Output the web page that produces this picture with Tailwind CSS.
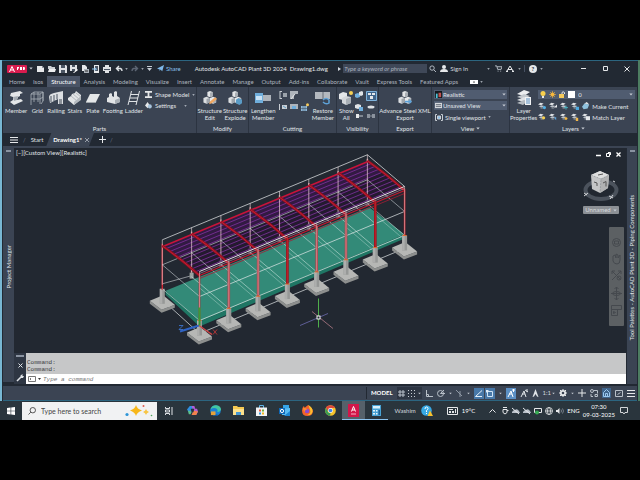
<!DOCTYPE html>
<html lang="en">
<head>
    <meta charset="UTF-8">
    <meta name="viewport" content="width=device-width, initial-scale=1.0">
    <title>Autodesk AutoCAD Plant 3D 2024 - Drawing1.dwg</title>
    <script src="https://cdn.jsdelivr.net/npm/@tailwindcss/browser@4"></script>
</head>
<body class="flex h-screen flex-col overflow-hidden bg-black py-[60px] font-['Lato','Open_Sans',sans-serif] text-[6px] leading-[8px] text-[#d3d8df]">

    <!-- shared symbols -->
    <svg class="hidden">
        <symbol id="caret" viewBox="0 0 6 4"><path d="M0.5 0.5h5L3 3.5z" fill="#c5cbd3"/></symbol>
        <symbol id="blocks" viewBox="0 0 16 16">
            <path d="M5 1l3-1 3 1v5l-3 1-3-1z" fill="#e4e6e8"/><path d="M8 2l3-1v5l-3 1z" fill="#a9afb5"/>
            <path d="M0.5 8l3.5-1.5 3.5 1.5v5l-3.5 1.5-3.5-1.5z" fill="#dcdfe2"/><path d="M4 9l3.5-1v5l-3.5 1.5z" fill="#9fa5ab"/>
            <path d="M8 8l3.5-1.5L15 8v5l-3.5 1.5L8 13z" fill="#e8eaec"/><path d="M11.5 9L15 8v5l-3.5 1.5z" fill="#a9afb5"/>
        </symbol>
        <symbol id="layers" viewBox="0 0 10 10">
            <path d="M0 3l3-2 4 1-3 2z" fill="#dfe2e5"/><path d="M1 5.5l3-1.5 4 1-3 2z" fill="#b9bfc6"/><path d="M2 7.5l2-1 3 1-2 1z" fill="#8f979f"/>
        </symbol>
    </svg>

    <div class="flex min-h-0 flex-1 flex-col border-l-2 border-r-2 border-l-[#78b7d3] border-r-[#4d7d61] bg-[#222933]">

        <!-- title bar -->
        <header class="flex h-4 shrink-0 items-center border-t border-[#2c6580] pl-[5px]">
            <button class="flex h-2 items-center gap-[2px] rounded-[1px] bg-[#d81b4e] px-[2px] text-white" aria-label="Application menu">
                <svg class="h-[6px] w-[6px]" viewBox="0 0 6 6" fill="none" stroke="#fff"><path d="M0.5 6L3 0.5 5.5 6M1.5 4h3"/></svg>
                <svg class="h-[3px] w-2" viewBox="0 0 8 3" fill="#fff"><path d="M0 0h2v1.5H1V3H0zM3 0h2v3H3zM6 0h1.5l.5 1.5L7.5 3H6z"/></svg>
            </button>
            <svg class="ml-[2px] h-[3px] w-1"><use href="#caret"/></svg>
            <nav class="ml-1 flex items-center gap-[3px]" aria-label="Quick access">
                <button aria-label="New"><svg class="h-2 w-2" viewBox="0 0 8 8"><path d="M0 1h5l2 2v4H0z" fill="#e6e8ea"/><path d="M5 1v2h2z" fill="#8d949c"/></svg></button>
                <button aria-label="Open"><svg class="h-2 w-2" viewBox="0 0 8 8"><path d="M0 1h3l1 1h3v2H0z" fill="#cdd1d5"/><path d="M1 4h7L7 7H0z" fill="#eceef0"/></svg></button>
                <button aria-label="Save"><svg class="h-2 w-2" viewBox="0 0 8 8"><path d="M0 0h7l1 1v7H0z" fill="#dfe2e5"/><path d="M2 0h4v3H2zM2 5h4v3H2z" fill="#4b5563"/></svg></button>
                <button aria-label="Save as"><svg class="h-2 w-2" viewBox="0 0 8 8"><path d="M0 0h7v6H0z" fill="#dfe2e5"/><path d="M2 0h3v2H2zM2 4h3v2H2z" fill="#4b5563"/><path d="M3 8l4-4 1 1-4 3z" fill="#fff"/></svg></button>
                <button aria-label="Open from web"><svg class="h-2 w-2" viewBox="0 0 8 8"><path d="M1 0h3l2 2v4H1z" fill="#e6e8ea"/><path d="M3 4h5v4H3z" fill="#aab1b9"/><path d="M4 6h3" stroke="#333"/></svg></button>
                <button aria-label="Save to mobile"><svg class="h-2 w-2" viewBox="0 0 8 8"><path d="M2 0h5v8H2z" fill="#e6e8ea"/><path d="M3 1h3v5H3z" fill="#4b5563"/><path d="M0 4h4M3 3l1.5 1L3 5.5" stroke="#8ec4ee" fill="none"/></svg></button>
                <button aria-label="Plot"><svg class="h-2 w-2" viewBox="0 0 8 8"><path d="M2 0h4v2H2zM0 2h8v4H0zM2 6h4v2H2z" fill="#dfe2e5"/><path d="M1 4h6v1H1z" fill="#4b5563"/></svg></button>
                <button aria-label="Undo" class="ml-px flex items-center gap-[2px]"><svg class="h-2 w-2" viewBox="0 0 8 8" fill="none" stroke="#dfe2e5" stroke-width="1.4"><path d="M4 1L1.5 3.5 4 6M1.5 3.5h4Q7 4 7 6"/></svg><svg class="h-[2px] w-[3px]"><use href="#caret"/></svg></button>
                <button aria-label="Redo" class="flex items-center gap-[2px]"><svg class="h-2 w-2" viewBox="0 0 8 8" fill="none" stroke="#5d6674" stroke-width="1.4"><path d="M4 1l2.5 2.5L4 6M6.5 3.5h-4Q1 4 1 6"/></svg><svg class="h-[2px] w-[3px]"><use href="#caret"/></svg></button>
                <button aria-label="Customize"><svg class="h-[5px] w-[5px]" viewBox="0 0 5 5" fill="#c5cbd3"><path d="M0 0h5v1H0zM0 2h5L2.5 5z"/></svg></button>
                <button class="ml-[2px] flex items-center gap-[2px] text-[#8cc3ee]"><svg class="h-[7px] w-[7px]" viewBox="0 0 8 8"><path d="M0 4l8-4-2 7-2-2-1 2V5z" fill="#7fb9ea"/></svg>Share</button>
            </nav>
            <div class="ml-[14px] whitespace-nowrap text-[#e4e7ea]">Autodesk AutoCAD Plant 3D 2024</div>
            <div class="ml-[3px] text-[#e4e7ea]">Drawing1.dwg</div>
            <div class="ml-auto flex items-center">
                <svg class="mr-[2px] h-1 w-[3px]" viewBox="0 0 3 4"><path d="M0 0l3 2-3 2z" fill="#d3d8df"/></svg>
                <input type="text" aria-label="Search help" placeholder="Type a keyword or phrase" class="h-[9px] w-[84px] bg-[#3f4858] px-px italic placeholder:text-[#a9b1bc]">
                <svg class="ml-[2px] h-[7px] w-[7px]" viewBox="0 0 8 8" fill="none" stroke="#c5cbd3"><circle cx="3.5" cy="3.5" r="2.5"/><path d="M5.5 5.5L8 8"/></svg>
                <button class="ml-1 flex items-center gap-[2px]"><svg class="h-[7px] w-2" viewBox="0 0 8 7" fill="#e6e8ea"><circle cx="4" cy="2" r="2"/><path d="M0 7q0-3 4-3t4 3z"/></svg>Sign In<svg class="ml-[17px] h-[2px] w-[3px]"><use href="#caret"/></svg></button>
                <svg class="ml-[5px] h-[7px] w-[7px]" viewBox="0 0 8 8" fill="none" stroke="#c5cbd3"><path d="M0 1h2l1 4h4l1-3H2.5"/><path d="M3 7h1M6 7h1"/></svg>
                <svg class="ml-1 h-[7px] w-2" viewBox="0 0 8 7" fill="none" stroke="#e6e8ea"><path d="M1 6L4 1l3 5M2 4.5h4"/><path d="M0 6.5h2M6 6.5h2" stroke-width="1.5"/></svg>
                <svg class="ml-1 h-[2px] w-[3px]"><use href="#caret"/></svg>
                <div class="ml-[3px] h-[7px] border-l border-[#465061]"></div>
                <button aria-label="Help" class="ml-1 flex h-2 w-2 items-center justify-center rounded-full bg-[#e6e8ea] font-bold text-[#222933]">?</button>
                <svg class="ml-[3px] h-[2px] w-[3px]"><use href="#caret"/></svg>
                <button aria-label="Minimize" class="ml-[38px]"><svg class="h-[7px] w-[5px]" viewBox="0 0 5 7" stroke="#e6e8ea"><path d="M0 3.5h5"/></svg></button>
                <button aria-label="Maximize" class="ml-[17px]"><svg class="h-[5px] w-[5px]" viewBox="0 0 5 5" fill="none" stroke="#e6e8ea"><path d="M0.5 0.5h4v4h-4z"/></svg></button>
                <button aria-label="Close" class="ml-4 mr-2"><svg class="h-[6px] w-[6px]" viewBox="0 0 6 6" stroke="#e6e8ea"><path d="M0.5 0.5l5 5M5.5 0.5l-5 5"/></svg></button>
            </div>
        </header>

        <!-- ribbon tabs -->
        <nav class="flex h-[11px] shrink-0 items-center gap-2 whitespace-nowrap pl-[7px] leading-[11px] text-[#aeb5bf]">
            <a href="#">Home</a>
            <a href="#">Isos</a>
            <a href="#" class="-mx-1 bg-[#4a5466] px-1 text-white">Structure</a>
            <a href="#">Analysis</a>
            <a href="#">Modeling</a>
            <a href="#">Visualize</a>
            <a href="#">Insert</a>
            <a href="#">Annotate</a>
            <a href="#">Manage</a>
            <a href="#">Output</a>
            <a href="#">Add-ins</a>
            <a href="#">Collaborate</a>
            <a href="#">Vault</a>
            <a href="#">Express Tools</a>
            <a href="#">Featured Apps</a>
            <button aria-label="Ribbon display" class="ml-1 flex items-center gap-[2px]"><svg class="h-1 w-2" viewBox="0 0 8 4"><path d="M0 0h8v4H0z" fill="#fff"/><path d="M3 2.5h2L4 1z" fill="#222"/></svg><svg class="h-[2px] w-[3px]"><use href="#caret"/></svg></button>
        </nav>

        <!-- ribbon panels -->
        <section class="mx-px grid h-[46px] shrink-0 grid-cols-[194fr_52fr_88fr_42fr_53fr_78fr_127fr] divide-x divide-[#2c3441] bg-[#3b4453] text-center leading-[7px] text-[#e0e4e8]">
            <div class="flex min-w-0 flex-col justify-between pt-1">
                <div class="flex gap-[2px] pl-[2px]">
                    <button class="flex flex-col items-center gap-[2px]"><svg class="h-[14px] w-4" viewBox="0 0 14 14"><path d="M2 2l9-2 3 2-3 1v2L9 6l-1 3 4-1 2 2-9 4-4-3 3-2V6L1 5z" fill="#e4e6e8"/><path d="M4 6l5-1-1 4-3 1z" fill="#a5abb2"/></svg>Member</button>
                    <button class="flex flex-col items-center gap-[2px]"><svg class="h-[14px] w-4" viewBox="0 0 14 14" fill="none" stroke="#aab1b9" stroke-width=".8"><path d="M1 3l3-2h9v9l-2 3M1 3v11M4 1v10M8 1v10M13 1v9M1 3h9l3-2M10 3v10M1 8h9l3-2"/></svg>Grid</button>
                    <button class="flex flex-col items-center gap-[2px]"><svg class="h-[14px] w-4" viewBox="0 0 14 14"><path d="M0 6q0-3 5-4l9-2v13H9V8L1 12z" fill="#dcdfe2"/><path d="M2 5v6M5 4v6M8 3v5" stroke="#4b5563"/><path d="M10 8h3v5h-3z" fill="#8b9199"/></svg>Railing</button>
                    <button class="flex flex-col items-center gap-[2px]"><svg class="h-[14px] w-4" viewBox="0 0 14 14"><path d="M0 7l3-2 1-2 3-1 1-2 5 4v4l-7 6-6-5z" fill="#e2e4e6"/><path d="M3 5l6 5M5 3l6 5M8 2l5 4" stroke="#b5babf"/><path d="M6 11l7-6v4l-7 5z" fill="#b4b9be"/></svg>Stairs</button>
                    <button class="flex flex-col items-center gap-[2px]"><svg class="h-[14px] w-4" viewBox="0 0 14 14"><path d="M4 3h10l-4 8H0z" fill="#e4e6e8"/><path d="M0 11h10v1H0z" fill="#9fa5ab"/></svg>Plate</button>
                    <button class="flex flex-col items-center gap-[2px]"><svg class="h-[14px] w-4" viewBox="0 0 14 14"><path d="M1 7l2-1V3l2-1 1 1v2l2 1V1l2-1 1 1v4l3 2v4l-5 2-8-2z" fill="#e2e4e6"/><path d="M9 9l5-2v4l-5 2z" fill="#aab0b6"/></svg>Footing</button>
                    <button class="flex flex-col items-center gap-[2px]"><svg class="h-[14px] w-4" viewBox="0 0 14 14" fill="none" stroke="#dfe2e5"><path d="M4.5 0L1 14M12.5 0L9 14M4 3.5h8M3 7h8M2 10.5h8"/></svg>Ladder</button>
                    <div class="flex flex-col gap-1 whitespace-nowrap">
                        <button class="flex items-center gap-[3px]"><svg class="h-[7px] w-[7px]" viewBox="0 0 8 8" fill="#e6e8ea"><path d="M0 0h8v2H5v4h3v2H0V6h3V2H0z"/></svg>Shape Model<svg class="h-[2px] w-[3px]"><use href="#caret"/></svg></button>
                        <button class="flex items-center gap-[3px]"><svg class="h-[7px] w-[7px]" viewBox="0 0 8 8"><path d="M0 4l3-4 2 3-2 4z" fill="#e6e8ea"/><circle cx="5.5" cy="5" r="2.3" fill="#a8c4dd"/></svg>Settings<svg class="ml-[5px] h-[2px] w-[3px]"><use href="#caret"/></svg></button>
                    </div>
                </div>
                <h2 class="pb-px">Parts</h2>
            </div>
            <div class="flex min-w-0 flex-col justify-between pt-1">
                <div class="flex justify-center gap-px">
                    <button class="flex flex-col items-center gap-[2px]"><svg class="h-[14px] w-4" viewBox="0 0 16 16"><use href="#blocks"/><path d="M8 12l6-5 2 2-6 5-3 1z" fill="#f0a862"/></svg>Structure<br>Edit</button>
                    <button class="flex flex-col items-center gap-[2px]"><svg class="h-[14px] w-4" viewBox="0 0 16 16"><use href="#blocks"/><path d="M9 10l3-2 4 2v4l-3 2-4-2z" fill="#5b9cc6"/></svg>Structure<br>Explode</button>
                </div>
                <h2 class="pb-px">Modify</h2>
            </div>
            <div class="flex min-w-0 flex-col justify-between pt-1">
                <div class="flex justify-between px-[2px]">
                    <button class="flex flex-col items-center gap-[2px]"><svg class="h-[14px] w-4" viewBox="0 0 16 14"><path d="M0 2h8v10H0z" fill="#6faedc"/><path d="M1 5h6v4H1z" fill="#c9e2f5"/><path d="M8 4h8v6H8z" fill="#aeb4bb"/></svg>Lengthen<br>Member</button>
                    <div class="grid grid-cols-3 content-start gap-x-[3px] gap-y-1">
                        <svg class="h-2 w-2" viewBox="0 0 8 8"><path d="M1 0v8M1 0.5h2M1 7.5h2" stroke="#c9ced4" fill="none"/><path d="M4 2h4v4H4z" fill="#9ca3ab"/></svg>
                        <svg class="h-2 w-2" viewBox="0 0 8 8"><path d="M0 0h8v3H4v5H0z" fill="#aeb4bb"/><path d="M1 8l4-5" stroke="#e6e8ea"/></svg>
                        <span></span>
                        <svg class="h-2 w-2" viewBox="0 0 8 8"><path d="M0 1h1v6H0zM3 2h5v4H3z" fill="#c9ced4"/><path d="M4 3l3 2" stroke="#5b9cc6"/></svg>
                        <svg class="h-2 w-2" viewBox="0 0 8 8"><path d="M0 1h8v5H0z" fill="#aeb4bb"/><path d="M2 3h4v3H2z" fill="#6faedc"/></svg>
                        <svg class="h-2 w-2" viewBox="0 0 8 8"><path d="M0 3h6v5H0z" fill="#8fb9da"/><path d="M2 3v5M4 3v5M0 5.5h6" stroke="#3b4453" stroke-width=".5"/><circle cx="6.5" cy="1.8" r="1.5" fill="#f4c95b"/></svg>
                    </div>
                    <button class="flex flex-col items-center gap-[2px]"><svg class="h-[14px] w-4" viewBox="0 0 16 14"><path d="M0 1h15v7H0z" fill="#b4b9bf"/><path d="M8 1v7" stroke="#666d76"/><path d="M8 9q3-3 6 0v3q-3 2-6-1" fill="none" stroke="#5ea2d8" stroke-width="1.5"/></svg>Restore<br>Member</button>
                </div>
                <h2 class="pb-px">Cutting</h2>
            </div>
            <div class="flex min-w-0 flex-col justify-between pt-1">
                <div class="flex justify-between px-[2px]">
                    <button class="flex flex-col items-center gap-[2px]"><svg class="h-[14px] w-[14px]" viewBox="0 0 14 14"><path d="M0 3l4-2 4 1v5l-4 2-4-1z" fill="#e4e6e8"/><path d="M3 7l4-2 5 1v6l-5 2-4-2z" fill="#d3d6d9"/><path d="M7 8l5-2v6l-5 2z" fill="#a9afb5"/><circle cx="12" cy="2" r="2" fill="#f6d155"/></svg>Show<br>All</button>
                    <div class="grid grid-cols-2 content-start gap-[2px]">
                        <svg class="h-[9px] w-[10px]" viewBox="0 0 10 9"><path d="M1 3l3-1 2 1v3L3 7 1 6z" fill="#6faedc"/><path d="M5 1l3-1 1 1v3L7 5 5 4z" fill="#e0e3e6"/></svg>
                        <svg class="h-[10px] w-[11px]" viewBox="0 0 11 10"><path d="M0.5 0.5h10v9h-10z" fill="#40658a" stroke="#7fb3dc"/><path d="M2 2h3v2H2zM6 2h3v2H6zM4 5h3v3H4z" fill="#e6e8ea"/></svg>
                        <svg class="h-[9px] w-[10px]" viewBox="0 0 10 9"><path d="M1 2l3-1 3 1v3L4 6 1 5z" fill="#e0e3e6"/><path d="M5 4h4v4H5z" fill="#6faedc"/></svg>
                        <svg class="h-[9px] w-[10px]" viewBox="0 0 10 9"><ellipse cx="5" cy="4" rx="3.5" ry="1.5" fill="#e0e3e6"/></svg>
                        <svg class="h-1 w-[10px]" viewBox="0 0 10 4"><path d="M2 0h3v4H2z" fill="#e6e8ea"/><path d="M5 2h4" stroke="#c5cbd3"/></svg>
                        <svg class="h-1 w-[10px]" viewBox="0 0 10 4"><path d="M1 0h3v4H1zM6 0h3v4H6zM4 1.5h2v1H4z" fill="#8b939e"/></svg>
                    </div>
                </div>
                <h2 class="pb-px">Visibility</h2>
            </div>
            <div class="flex min-w-0 flex-col items-center justify-between pt-1">
                <button class="flex flex-col items-center gap-[2px] whitespace-nowrap"><svg class="h-[14px] w-4" viewBox="0 0 16 16"><use href="#blocks"/><path d="M8 11h5V9l3 3-3 3v-2H8z" fill="#5ea2d8"/></svg>Advance Steel XML<br>Export</button>
                <h2 class="pb-px">Export</h2>
            </div>
            <div class="flex min-w-0 flex-col justify-between pt-[3px]">
                <div class="flex flex-col gap-[2px] px-[2px]">
                    <div class="flex h-[9px] items-center bg-[#505c70] px-px">
                        <svg class="h-[7px] w-[7px]" viewBox="0 0 8 8"><path d="M0 0h8v8H0z" fill="#14181d"/><path d="M1 3h2v5H1z" fill="#4fc3d9"/><path d="M4 2h3v5H4z" fill="#c0504d"/></svg>
                        <select aria-label="Visual style" class="ml-px h-[9px] min-w-0 flex-1 appearance-none bg-transparent"><option>Realistic</option></select>
                        <svg class="h-[3px] w-1"><use href="#caret"/></svg>
                    </div>
                    <div class="flex h-[9px] items-center bg-[#505c70] px-px">
                        <svg class="h-[7px] w-[7px]" viewBox="0 0 8 8"><path d="M0 1h8v6H0z" fill="#d5d8dc"/><path d="M1 3h6M1 5h6" stroke="#5b6470"/></svg>
                        <select aria-label="Named view" class="ml-px h-[9px] min-w-0 flex-1 appearance-none bg-transparent"><option>Unsaved View</option></select>
                        <svg class="h-[3px] w-1"><use href="#caret"/></svg>
                    </div>
                    <button class="flex h-[10px] items-center gap-[2px] whitespace-nowrap px-px"><svg class="h-[7px] w-2" viewBox="0 0 8 7" fill="none" stroke="#c9ced4"><path d="M2 0.5H.5v6H2M6 0.5h1.5v6H6"/><path d="M2.5 2h3v3h-3z" fill="#8ec4ee"/></svg>Single viewport<svg class="h-[2px] w-[3px]"><use href="#caret"/></svg></button>
                </div>
                <h2 class="flex items-center justify-center gap-[2px] pb-px">View<svg class="h-[3px] w-1"><use href="#caret"/></svg></h2>
            </div>
            <div class="flex min-w-0 flex-col justify-between pt-[3px]">
                <div class="flex gap-px pr-[2px]">
                    <button class="flex flex-col items-center gap-px"><svg class="h-4 w-4" viewBox="0 0 16 16"><path d="M1 4l7-4 6 2-6 4z" fill="#eceef0"/><path d="M1 7l7-3 6 2-6 3z" fill="#c4c9ce"/><path d="M1 10l7-3 6 2-6 3z" fill="#e0e3e6"/><path d="M1 13l7-3 4 1-5 4z" fill="#b3b9bf"/><path d="M9 7h6v8H9z" fill="#f1f3f5"/><path d="M10 9h4M10 11h4M10 13h4" stroke="#5b8fc0"/></svg>Layer<br>Properties</button>
                    <div class="flex min-w-0 flex-1 flex-col gap-[3px]">
                        <div class="flex h-[9px] items-center gap-[3px] bg-[#505c70] px-[2px]">
                            <svg class="h-[7px] w-[6px]" viewBox="0 0 6 7"><circle cx="3" cy="2.5" r="2.5" fill="#f7cf4d"/><path d="M2 5h2v2H2z" fill="#e6e8ea"/></svg>
                            <svg class="h-[7px] w-[7px]" viewBox="0 0 7 7"><circle cx="3.5" cy="3.5" r="2" fill="#f6b73c"/><path d="M3.5 0v7M0 3.5h7M1 1l5 5M6 1L1 6" stroke="#f6b73c" stroke-width=".6"/></svg>
                            <svg class="h-[7px] w-[6px]" viewBox="0 0 6 7"><path d="M0 3h5v4H0z" fill="#f4c95b"/><path d="M3 3V1.5q1-1.5 2.5 0V3" fill="none" stroke="#e6e8ea"/></svg>
                            <span class="h-[7px] w-[7px] bg-white"></span>
                            <select aria-label="Layer" class="h-[9px] min-w-0 flex-1 appearance-none bg-transparent"><option>0</option></select>
                            <svg class="h-[3px] w-1"><use href="#caret"/></svg>
                        </div>
                        <div class="flex items-center gap-[3px]">
                            <svg class="h-2 w-2" viewBox="0 0 10 10"><use href="#layers"/><circle cx="8" cy="7" r="2" fill="#51b0e6"/></svg>
                            <svg class="h-2 w-2" viewBox="0 0 10 10"><use href="#layers"/><path d="M6 7l4-4v4z" fill="#e6e8ea"/></svg>
                            <svg class="h-2 w-2" viewBox="0 0 10 10"><use href="#layers"/><path d="M5 7h5M7.5 4.5v5" stroke="#4cc2cf"/></svg>
                            <svg class="h-2 w-2" viewBox="0 0 10 10"><use href="#layers"/><path d="M6 6h4v4H6z" fill="#4aa7de"/></svg>
                            <button class="flex items-center gap-[2px] whitespace-nowrap"><svg class="h-2 w-2" viewBox="0 0 10 10"><path d="M0 6l3-4 6 1-2 5-5 1z" fill="#8fc1dd"/><path d="M3 2l3-2 3 3z" fill="#e6e8ea"/></svg>Make Current</button>
                        </div>
                        <div class="flex items-center gap-[3px]">
                            <svg class="h-2 w-2" viewBox="0 0 10 10"><use href="#layers"/><circle cx="7" cy="6" r="2" fill="#f7cf4d"/></svg>
                            <svg class="h-2 w-2" viewBox="0 0 10 10"><use href="#layers"/><path d="M6 6l3-1v4z" fill="#5ea2d8"/></svg>
                            <svg class="h-2 w-2" viewBox="0 0 10 10"><use href="#layers"/><circle cx="7.5" cy="7" r="1.8" fill="#f6b73c"/></svg>
                            <svg class="h-2 w-2" viewBox="0 0 10 10"><use href="#layers"/><path d="M6 6h3v4H6z" fill="#f0b64a"/></svg>
                            <button class="flex items-center gap-[2px] whitespace-nowrap"><svg class="h-2 w-2" viewBox="0 0 10 10"><use href="#layers"/><path d="M5 4h5v5H5z" fill="#e6e8ea"/></svg>Match Layer</button>
                        </div>
                    </div>
                </div>
                <h2 class="flex items-center justify-center gap-[2px] pb-px">Layers<svg class="h-[3px] w-1"><use href="#caret"/></svg></h2>
            </div>
        </section>

        <!-- drawing tabs -->
        <nav class="flex h-[13px] shrink-0 items-center pl-2">
            <button aria-label="Menu"><svg class="h-[6px] w-2" viewBox="0 0 8 6" fill="#e6e8ea"><path d="M0 0h8v1H0zM0 2.5h8v1H0zM0 5h8v1H0z"/></svg></button>
            <span class="mx-[5px] text-[#6d7788]">/</span>
            <a href="#" class="text-[#e0e4e8]">Start</a>
            <a href="#" class="ml-[3px] flex h-[13px] items-center gap-[3px] bg-[#3b4453] pl-[7px] pr-[5px] font-bold text-white [clip-path:polygon(5px_0,100%_0,calc(100%-5px)_100%,0_100%)]">Drawing1*<svg class="h-1 w-1" viewBox="0 0 4 4" stroke="#aeb5bf" stroke-width=".8"><path d="M0 0l4 4M4 0L0 4"/></svg></a>
            <button aria-label="New drawing" class="ml-[5px]"><svg class="h-[7px] w-[7px]" viewBox="0 0 7 7" stroke="#e6e8ea"><path d="M3.5 0v7M0 3.5h7"/></svg></button>
            <span class="ml-1 text-[#6d7788]">/</span>
        </nav>

        <!-- workspace -->
        <div class="mx-px flex min-h-0 flex-1 border-t-2 border-[#3b4453]">
            <aside class="flex w-[11px] shrink-0 flex-col items-center border-b-2 border-b-[#222933] bg-[#3b4453]">
                <div class="mt-[2px] h-[2px] w-[5px] bg-[#8a93a1]"></div>
                <div class="flex flex-1 items-center text-[#e0e4e8]"><span class="rotate-180 [writing-mode:vertical-rl]">Project Manager</span></div>
            </aside>

            <div class="flex min-w-0 flex-1 flex-col">
                <main class="relative min-h-0 flex-1 bg-[#222831]">
                    <svg id="model" class="block h-full w-full" viewBox="14 148 612 204"></svg>
                    <div class="absolute left-[2px] top-px text-[#e0e4e8]">[−][Custom View][Realistic]</div>

                    <div class="absolute right-[5px] top-[3px] flex items-center gap-[5px]">
                        <button aria-label="Minimize drawing"><svg class="h-[6px] w-[5px]" viewBox="0 0 5 6" stroke="#fff" stroke-width="1.5"><path d="M0 4.5h5"/></svg></button>
                        <button aria-label="Restore drawing"><svg class="h-[5px] w-[5px]" viewBox="0 0 5 5" fill="none" stroke="#fff"><path d="M0.5 1.5h3v3h-3zM2 .5h2.5V3"/></svg></button>
                        <button aria-label="Close drawing"><svg class="h-[5px] w-[5px]" viewBox="0 0 5 5" stroke="#fff" stroke-width="1.3"><path d="M0.5 0.5l4 4M4.5 0.5l-4 4"/></svg></button>
                    </div>

                    <!-- view cube -->
                    <div class="absolute right-[6px] top-5 flex flex-col items-center gap-[2px]">
                        <svg class="h-[36px] w-[38px]" viewBox="583 168 38 36">
                            <ellipse cx="602" cy="190" rx="15.5" ry="9" fill="none" stroke="#4b525c" stroke-width="4"/>
                            <path d="M592 175l9-4 9 4-1 13-8 5-8-4z" fill="#c4c5c6"/>
                            <path d="M592 175l9-4 9 4-8 4z" fill="#dddede"/>
                            <path d="M602 179l8-4-1 13-8 5z" fill="#b1b2b3"/>
                            <path d="M592 175l10 4-1 14M602 179l8-4" fill="none" stroke="#777c82" stroke-width=".5" stroke-dasharray="2 1"/>
                            <path d="M599 175l5-1M595 182l3 1v3M604 183l3-1.5v5" fill="none" stroke="#555"/>
                            <path d="M585 193l3 2M585 196l4-3M610 196l4 2M611 199l3-4M614 181l2 1" stroke="#d5d7da" fill="none"/>
                        </svg>
                        <button class="flex h-2 items-center gap-[2px] rounded-[1px] bg-[#8c9095] px-[2px] text-[#d8dadc]">Unnamed<svg class="h-[3px] w-1"><use href="#caret"/></svg></button>
                    </div>

                    <!-- navigation bar -->
                    <div class="absolute right-[2px] top-[79px] flex h-[99px] w-[15px] flex-col items-center justify-around rounded-[1px] bg-[#5c6063] py-[7px]">
                        <svg class="h-[11px] w-[11px]" viewBox="0 0 11 11" fill="none" stroke="#45494e"><circle cx="5.5" cy="5.5" r="4"/><path d="M3.5 4h4v3h-4z"/></svg>
                        <svg class="h-3 w-[11px]" viewBox="0 0 11 12" fill="none" stroke="#45494e"><path d="M2 6V3l2-1 1 3V1l2 1v3l2-3v5q0 4-3 4T2 8z"/></svg>
                        <svg class="h-[11px] w-[11px]" viewBox="0 0 11 11" fill="none" stroke="#45494e"><path d="M1 1l9 9M10 1L1 10M1 4V1h3M7 1h3v3"/><circle cx="8" cy="8" r="2"/></svg>
                        <svg class="h-[13px] w-[11px]" viewBox="0 0 11 13" fill="none" stroke="#45494e"><path d="M5.5 0v13M0 6.5h11M3.5 2l2-2 2 2M3.5 11l2 2 2-2"/><ellipse cx="5.5" cy="6.5" rx="4" ry="2"/></svg>
                        <svg class="h-[11px] w-[11px]" viewBox="0 0 11 11" fill="none" stroke="#45494e"><path d="M0.5 0.5h10v4h-10zM0.5 4.5h6v6h-6zM2.5 6.5l2 1-2 1z"/></svg>
                    </div>
                </main>

                <!-- command line -->
                <div class="flex h-[31px] shrink-0 font-['Liberation_Mono',monospace] leading-[7px]">
                    <div class="flex w-3 flex-col items-center justify-between bg-[#2e3643] py-[2px]">
                        <div class="h-[2px] w-2 bg-[#8a93a1]"></div>
                        <button aria-label="Close command line"><svg class="block h-[5px] w-[5px]" viewBox="0 0 5 5" stroke="#e0e4e8"><path d="M0.5 0.5l4 4M4.5 0.5l-4 4"/></svg></button>
                        <button aria-label="Customize command line"><svg class="block h-2 w-2" viewBox="0 0 8 8"><path d="M1 7l4-4" stroke="#e0e4e8" stroke-width="1.6"/><path d="M4.5 1.5L6.5 0v2h1.5L7 4 4.5 4z" fill="#e0e4e8"/></svg></button>
                    </div>
                    <div class="flex flex-1 flex-col">
                        <div class="flex-1 bg-[#c6c7c8] pl-px pt-[6px] text-[#3d4043]">Command:<br>Command:</div>
                        <label class="flex h-[10px] items-center gap-[2px] bg-white px-[2px]">
                            <svg class="h-[6px] w-2" viewBox="0 0 8 6" fill="none" stroke="#777"><path d="M0.5 0.5h7v5h-7zM2 2l1 1-1 1"/></svg>
                            <svg class="h-[2px] w-[3px]" viewBox="0 0 6 4"><path d="M0 0h6L3 4z" fill="#333"/></svg>
                            <input type="text" aria-label="Command" placeholder="Type a command" class="flex-1 italic placeholder:text-[#757575]">
                        </label>
                    </div>
                </div>
            </div>

            <aside class="flex w-[11px] shrink-0 flex-col items-center border-l border-[#222933] bg-[#3b4453]">
                <div class="mt-[2px] h-[2px] w-[5px] bg-[#8a93a1]"></div>
                <div class="flex flex-1 items-center whitespace-nowrap text-[#e0e4e8]"><span class="rotate-180 [writing-mode:vertical-rl]">Tool Palettes - AutoCAD Plant 3D - Piping Components</span></div>
            </aside>
        </div>

        <!-- status bar -->
        <footer class="mx-px mt-[2px] flex h-[15px] shrink-0 items-center justify-end gap-1 border-b border-[#2c6580] bg-[#3b4453] pr-[2px]">
            <div class="h-3 border-l border-[#222933]"></div>
            <button class="font-bold text-white">MODEL</button>
            <div class="flex h-3 items-center gap-[3px] bg-[#2d3542] px-px">
                <svg class="h-[7px] w-[7px]" viewBox="0 0 7 7" stroke="#b9c0c9"><path d="M2 0v7M5 0v7M0 2h7M0 5h7"/></svg>
                <svg class="h-[7px] w-[7px]" viewBox="0 0 7 7" fill="#c9ced4"><path d="M0 0h1v1H0zM3 0h1v1H3zM6 0h1v1H6zM0 3h1v1H0zM3 3h1v1H3zM6 3h1v1H6zM0 6h1v1H0zM3 6h1v1H3zM6 6h1v1H6z"/></svg>
                <svg class="h-[3px] w-[3px]"><use href="#caret"/></svg>
            </div>
            <svg class="h-[7px] w-[7px]" viewBox="0 0 7 7" fill="none" stroke="#b9c0c9"><path d="M0.5 0v6.5H7M0 4.5h2.5V7"/></svg>
            <svg class="h-2 w-2" viewBox="0 0 8 8" fill="none" stroke="#b9c0c9"><circle cx="3.5" cy="4.5" r="3"/><path d="M3.5 4.5L7 1M3.5 4.5H8"/></svg>
            <svg class="h-[3px] w-[3px]"><use href="#caret"/></svg>
            <svg class="h-[7px] w-[7px]" viewBox="0 0 7 7" fill="none" stroke="#8f98a5"><path d="M0 0l6 6M4 1v6"/></svg>
            <svg class="h-[3px] w-[3px]"><use href="#caret"/></svg>
            <div class="flex gap-px">
                <button aria-label="Object snap tracking" class="flex h-[11px] w-[10px] items-center justify-center bg-[#4878a8]"><svg class="h-[7px] w-[7px]" viewBox="0 0 7 7" fill="none" stroke="#e6f0fa"><path d="M7 0.5L0.5 6.5H7"/></svg></button>
                <button aria-label="Object snap" class="flex h-[11px] w-[10px] items-center justify-center bg-[#4878a8]"><svg class="h-[7px] w-[7px]" viewBox="0 0 7 7" fill="none" stroke="#cfe3f5"><path d="M1.5 1.5h5v5h-5z"/><path d="M0 0h2v2H0z" fill="#fff"/></svg></button>
            </div>
            <svg class="h-[3px] w-[3px]"><use href="#caret"/></svg>
            <button aria-label="Annotation visibility" class="flex h-[11px] w-[10px] items-center justify-center bg-[#5b8fc4]"><svg class="h-2 w-2" viewBox="0 0 8 8" fill="none" stroke="#fff"><path d="M1 8l3-6 2 6M2 5h3M5 1h3M6.5 0v3"/></svg></button>
            <svg class="h-2 w-2" viewBox="0 0 8 8" fill="none" stroke="#e0e4e8"><path d="M1 8l3-6 2 6M2 5h3M5 1l3 2M7 0v3"/></svg>
            <svg class="h-2 w-[7px]" viewBox="0 0 7 8" fill="#e0e4e8"><path d="M3.5 0L6.5 8 5 7.5 3.5 5 2 7.5 0.5 8z"/></svg>
            <button class="flex items-center gap-px">1:1<svg class="h-[3px] w-[3px]"><use href="#caret"/></svg></button>
            <svg class="h-2 w-2" viewBox="0 0 8 8" fill="none" stroke="#e6e8ea"><circle cx="4" cy="4" r="2.2" stroke-width="1.8"/><path d="M4 0v1M4 7v1M0 4h1M7 4h1M1 1l1 1M6 6l1 1M7 1L6 2M2 6L1 7"/></svg>
            <svg class="h-[3px] w-[3px]"><use href="#caret"/></svg>
            <svg class="h-2 w-2" viewBox="0 0 8 8" stroke="#e6e8ea"><path d="M4 0v8M0 4h8"/></svg>
            <svg class="h-2 w-2" viewBox="0 0 8 8" fill="none" stroke="#b9c0c9"><circle cx="2" cy="2" r="1.5"/><path d="M4 1.5h3.5v3M1 5v2.5h2M5 5.5h2.5v2H5z"/></svg>
            <svg class="h-[10px] w-[9px]" viewBox="0 0 9 10"><path d="M0 0h9v10H0z" fill="#3f648b"/><path d="M1.5 4.5l3-3 3 3v4h-6zM3.5 8V5.5h2V8" fill="none" stroke="#9cc8ee"/></svg>
            <svg class="h-[7px] w-2" viewBox="0 0 8 7" fill="none" stroke="#b9c0c9"><path d="M0.5 0.5h7v6h-7zM2.5 4.5l3-2"/></svg>
            <svg class="h-[7px] w-2" viewBox="0 0 8 7" fill="#e6e8ea"><path d="M0 0h8v1H0zM0 3h8v1H0zM0 6h8v1H0z"/></svg>
        </footer>
    </div>

    <!-- windows taskbar -->
    <footer class="flex h-[19px] shrink-0 items-center bg-[#2a353d]">
        <button aria-label="Start" class="flex w-[22px] justify-center"><svg class="h-2 w-2" viewBox="0 0 8 8" fill="#fff"><path d="M0 1l3.6-.5v3.2H0zM4.2.4L8 0v3.7H4.2zM0 4.3h3.6v3.2L0 7zM4.2 4.3H8V8l-3.8-.5z"/></svg></button>
        <label class="flex h-[18px] w-[135px] items-center gap-1 bg-[#f1f2f3] px-1 text-[7px]">
            <svg class="ml-[2px] h-2 w-2" viewBox="0 0 8 8" fill="none" stroke="#333" stroke-width=".8"><circle cx="4.8" cy="3.2" r="2.7"/><path d="M2.8 5.2L0.5 7.5"/></svg>
            <input type="text" aria-label="Search" placeholder="Type here to search" class="ml-px w-px flex-1 placeholder:text-[#444]">
            <svg class="h-[13px] w-7" viewBox="0 0 28 13"><path d="M11 1q1 4 6 5.5-5 1.5-6 5.5-1-4-6-5.5Q10 5 11 1z" fill="#f7b719"/><path d="M21 5q.5 2 3 3-2.5 1-3 3-.5-2-3-3 2.5-1 3-3z" fill="#f7c544"/><circle cx="2" cy="10.5" r="1.6" fill="#2f96d8"/><circle cx="18.5" cy="2" r="1" fill="#e05a4e"/><circle cx="26.5" cy="11.5" r=".8" fill="#4aa55a"/></svg>
        </label>
        <nav class="flex h-full items-stretch" aria-label="Pinned apps">
            <button aria-label="Task view" class="flex w-6 items-center justify-center"><svg class="h-2 w-2" viewBox="0 0 8 8" fill="none" stroke="#e0e4e8"><path d="M0.5 0v1.5h4V0M0.5 3h4v2h-4zM0.5 8V6.5h4V8M7 0v8"/></svg></button>
            <button aria-label="Copilot" class="flex w-[23px] items-center justify-center"><svg class="h-[11px] w-[11px]" viewBox="0 0 12 12"><path d="M3 1h4l2 4-2 3H2L0 5z" fill="#2f8fe0"/><path d="M5 1h3l1 3h2l1 3-2 4H6l1-5z" fill="#b65bd8"/><path d="M7 6l5 1-2 4H5z" fill="#f0824d"/><path d="M1 6l4 1-1 3H2z" fill="#5cc08a"/><path d="M4 4h4L7 8H5z" fill="#2a353d"/></svg></button>
            <button aria-label="Edge" class="flex w-[23px] items-center justify-center"><svg class="h-[11px] w-[11px]" viewBox="0 0 12 12"><circle cx="6" cy="6" r="5.8" fill="#1b80d4"/><path d="M0.5 5Q2 0 7 .3q5 .7 5 5Q11 8 8 7.5 9 4 6 3.5T0.5 5z" fill="#43c7a0"/><path d="M3 7q1 4 6 3.5-3 2.5-6 .5z" fill="#0d4f9c"/><path d="M1 7h5v4H1z" fill="#e6a23a"/></svg></button>
            <button aria-label="File Explorer" class="flex w-[23px] items-center justify-center"><svg class="h-[9px] w-[11px]" viewBox="0 0 11 9"><path d="M0 0h4l1 1h6v8H0z" fill="#f5c851"/><path d="M0 3h11v6H0z" fill="#fbe08c"/><path d="M3 9V6h5v3z" fill="#4496d2"/></svg></button>
            <button aria-label="Store" class="flex w-[23px] items-center justify-center"><svg class="h-[11px] w-[11px]" viewBox="0 0 11 11"><path d="M3.5 3V.5h4V3" fill="none" stroke="#5fb4e6"/><path d="M0 2.5h11V11H0z" fill="#f2f4f5"/><path d="M3 4.5h2v2H3z" fill="#e8553a"/><path d="M6 4.5h2v2H6z" fill="#6cb33f"/><path d="M3 7.5h2v2H3z" fill="#2f96d8"/><path d="M6 7.5h2v2H6z" fill="#f3b720"/></svg></button>
            <button aria-label="Outlook" class="flex w-[23px] items-center justify-center"><svg class="h-[11px] w-[11px]" viewBox="0 0 11 11"><path d="M4 0h6v4H4z" fill="#35a4e8"/><path d="M2 4l9-1v7H3z" fill="#59bdf4"/><path d="M0 3h6v6H0z" fill="#0f68b8"/><circle cx="3" cy="6" r="1.6" fill="none" stroke="#fff"/><path d="M5 11l6-5v5z" fill="#1d84d0"/></svg></button>
            <button aria-label="Firefox" class="flex w-[23px] items-center justify-center"><svg class="h-[11px] w-[11px]" viewBox="0 0 12 12"><path d="M6 12Q0 12 0 6q0-3 2-5l1 2q3-3 4-3 1 2 3 3 2 2 2 4-1 5-6 5z" fill="#f4622a"/><path d="M7 0q5 3 4.5 7T6 11q4-2 3-5T7 0z" fill="#fbc02f"/><circle cx="5.5" cy="6.5" r="2.5" fill="#8a4bd0"/><path d="M1 3q4 0 5 2-3 0-3 3-2-2-2-5z" fill="#f98b35"/></svg></button>
            <button aria-label="Chrome" class="flex w-[23px] items-center justify-center"><svg class="h-[11px] w-[11px]" viewBox="0 0 12 12"><circle cx="6" cy="6" r="5.8" fill="#f5c32c"/><path d="M1 3a5.8 5.8 0 0 1 10 0L6 3.5 3.5 7z" fill="#df4a3b"/><path d="M1 3l2.5 5L6 9l-.5 2.8A5.8 5.8 0 0 1 1 3z" fill="#3a9e55"/><circle cx="6" cy="6" r="2.7" fill="#fff"/><circle cx="6" cy="6" r="2" fill="#3f83ea"/></svg></button>
            <button aria-label="AutoCAD" class="flex w-[23px] items-center justify-center border-b border-[#8cc3ee] bg-[#56616a]"><svg class="h-[13px] w-[11px]" viewBox="0 0 11 13"><path d="M0 0h11v13H0z" fill="#d2174a"/><path d="M3.5 7.5l2-5 2 5M4.2 6h2.6" stroke="#fff" fill="none"/><path d="M3 9.5h5v1H3z" fill="#f4b8c8"/></svg></button>
            <button aria-label="Calculator" class="flex w-[23px] items-center justify-center border-b border-[#8cc3ee]"><svg class="h-[11px] w-[9px]" viewBox="0 0 9 11"><path d="M0 0h9v11H0z" fill="#48a2d4"/><path d="M1 1h7v2.5H1z" fill="#d8f0fb"/><path d="M1 5h2v1.5H1zM4 5h1.5v1.5H4zM1 8h2v1.5H1zM4 8h1.5v1.5H4z" fill="#eaf6fc"/><path d="M6.5 5H8v5H6.5z" fill="#1c5f92"/></svg></button>
        </nav>
        <div class="ml-auto flex items-center">
            <span>Washim</span>
            <svg class="ml-[5px] h-[11px] w-3" viewBox="0 0 12 11"><circle cx="5.5" cy="5.5" r="5.3" fill="#38a9e4"/><path d="M4 4q0-2 1.5-2T7 3.5q0 1-1.5 2V7M5.5 8v1" stroke="#fff" fill="none"/><path d="M9 5.5l3 5.5H6.5z" fill="#f7c22e"/></svg>
            <svg class="ml-[14px] h-2 w-[11px]" viewBox="0 0 11 8"><path d="M0.5 0.5h10v7h-10z" fill="none" stroke="#e6e8ea"/><path d="M2 2h4v1H2zM2 4h2v2H2zM5 4h2v2H5zM8 2h1v4H8z" fill="#e6e8ea"/></svg>
            <span class="ml-1 text-white">19°C</span>
            <svg class="ml-[14px] h-1 w-[7px]" viewBox="0 0 7 4" fill="none" stroke="#e6e8ea"><path d="M0.5 3.5l3-3 3 3"/></svg>
            <div class="ml-[5px] flex items-center gap-[3px]">
                <svg class="h-2 w-2" viewBox="0 0 8 8" fill="none" stroke="#e6e8ea"><path d="M2 2.5h4v3q-2 3-4 0zM2 .5h4M6 3.5h1.5"/></svg>
                <svg class="h-2 w-2" viewBox="0 0 8 8"><path d="M0 5q1-2 3-2 2-2 4 1l1 2H0z" fill="#b9c0c9"/><path d="M0 1l7 6" stroke="#e6e8ea"/></svg>
                <svg class="h-2 w-2" viewBox="0 0 8 8"><path d="M0 5q1-2 3-2 2-2 4 1l1 2H0z" fill="#b9c0c9"/><path d="M0 1l7 6" stroke="#e6e8ea"/></svg>
                <svg class="h-2 w-2" viewBox="0 0 8 8"><path d="M0.5 1.5h7v4h-7z" fill="none" stroke="#e6e8ea"/><circle cx="3" cy="5.5" r="2" fill="#37ad53"/></svg>
                <svg class="h-2 w-2" viewBox="0 0 8 8" fill="none" stroke="#e6e8ea" stroke-width=".8"><circle cx="4" cy="4" r="3.5"/><ellipse cx="4" cy="4" rx="1.5" ry="3.5"/><path d="M0.5 4h7"/></svg>
                <svg class="h-2 w-2" viewBox="0 0 8 8"><path d="M0 3h1.5L3.5 1v6l-2-2H0z" fill="#e6e8ea"/><path d="M5 2.5q1 1.5 0 3M6.5 1.5q2 2.5 0 5" stroke="#89929c" fill="none" stroke-width=".8"/></svg>
            </div>
            <span class="ml-[3px] text-white">ENG</span>
            <time class="ml-[3px] text-center text-white">07:30<br>09-03-2025</time>
            <button aria-label="Notifications" class="ml-[5px] mr-3"><svg class="h-2 w-2" viewBox="0 0 8 8" fill="none" stroke="#e6e8ea" stroke-width=".9"><path d="M0.5 0.5h7v5H5L4 7 3 5.5H.5z"/></svg></button>
        </div>
    </footer>

    <script>
        // Steel shed: bay i runs 0..7, j is 0 at the front row and 1 at the back row, h is the drop from the eaves.
        const svg = document.getElementById("model");
        const parts = [];
        const pt = (i, j, h) => [199.5 + 29.3 * i - 37.2 * j, 271 - 12.15 * i - 31.7 * j + h];
        const poly = (pts, fill, opacity = 1) =>
            parts.push(`<polygon points="${pts.map(p => p.join(",")).join(" ")}" fill="${fill}" fill-opacity="${opacity}"/>`);
        const line = (a, b, color, width = 0.7, opacity = 1) =>
            parts.push(`<line x1="${a[0]}" y1="${a[1]}" x2="${b[0]}" y2="${b[1]}" stroke="${color}" stroke-width="${width}" stroke-opacity="${opacity}"/>`);
        const move = (p, dx, dy) => [p[0] + dx, p[1] + dy];

        const footing = (i, j) => {
            const c = pt(i, j, 63);
            const l = move(c, -12.5, -2), f = move(c, -0.7, 7), r = move(c, 12.5, 2), b = move(c, 0.7, -7.5);
            poly([l, f, r, move(r, 0, 3), move(f, 0, 3), move(l, 0, 3)], "#8d8f8e");
            poly([l, f, r, b], "#b6b7b5");
            poly([move(c, -2.5, -14), move(c, 2.5, -14), move(c, 2.5, 1), move(c, -2.5, 1)], "#969897");
            poly([move(c, -2.5, -14), move(c, 0, -14), move(c, 0, 1), move(c, -2.5, 1)], "#adaead");
        };

        // ground lines and floor slab
        line(pt(0, 1, 60), pt(0, 0, 62), "#e3e6e8");
        line(pt(0, 0, 62), pt(7, 0, 62), "#e3e6e8");
        line(pt(0, 1, 44), pt(1, 1, 48), "#b8bcc0");
        footing(0, 1);
        const slab = [pt(0.05, 0.95, 50), pt(0, 0, 50), pt(7, 0, 48), pt(7, 0.95, 51)];
        poly([slab[0], slab[1], slab[2], move(slab[2], 0, 4), move(slab[1], 0, 5), move(slab[0], 0, 4)], "#1f7664");
        poly(slab, "#338a78");

        // back pedestals and columns
        for (let i = 0; i <= 7; i++) {
            const c = pt(i, 1, 45);
            if (i > 0) poly([move(c, -2, 0), move(c, 2, 0), move(c, 2, 6), move(c, -2, 6)], "#9aa09e");
            line(pt(i, 1, 4), pt(i, 1, i === 0 ? 50 : 45), i === 0 ? "#c8202e" : "#b98088", 1.5);
        }

        // roof sheet and purlins
        poly([pt(0, 1, 7), pt(7, 1, 7), pt(7, 0, 3), pt(0, 0, 3)], "#25152f", 0.75);
        poly([pt(0, 1, 7), pt(7, 1, 7), pt(7, 0.6, 5), pt(0, 0.6, 5)], "#3f1a55", 0.5);
        for (let n = 1; n < 10; n++) {
            const j = 1 - n / 10;
            line(pt(0, j, 3 + 3 * j), pt(7, j, 3 + 3 * j), "#9236b4", 0.8, 0.85);
        }

        // grid lines at floor and mid height
        for (let i = 0; i <= 7; i++) {
            line(pt(i, 1, 49), pt(i, 0, 49), "#d9efe8", 0.7, 0.75);
            line(pt(i, 1, 25), pt(i, 0, 25), "#dfe5e8", 0.7, 0.75);
            line(pt(i, 1, 0), pt(i, 1, 45), "#ecd6d9", 0.7, 0.9);
            if (i > 0) line(pt(i - 0.12, 0.7, 49), pt(i - 0.12, 0, 49), "#d9efe8", 0.5, 0.7);
        }
        line(pt(0, 0, 49), pt(7, 0, 49), "#dfeee9");
        line(pt(0, 0, 25), pt(7, 0, 25), "#e3e8ea");
        line(pt(0, 1, 25), pt(7, 1, 25), "#dfe5e8", 0.7, 0.8);

        // eaves beams and rafters
        line(pt(0, 1, 7), pt(7, 1, 7), "#c8143a", 1.6);
        line(pt(0, 0, 4), pt(7, 0, 4), "#c01a30", 1.2);
        line(pt(0, 0, 7), pt(7, 0, 7), "#a51d35", 0.8);
        for (let i = 0; i <= 7; i++) {
            const a = pt(i, 1, 6), m = pt(i, 0.45, 3), b = pt(i, 0, 4);
            parts.push(`<path d="M${a} Q${m} ${b}" fill="none" stroke="#94101e" stroke-width="2.6"/>`);
            parts.push(`<path d="M${a} Q${m} ${b}" fill="none" stroke="#d22440" stroke-width=".7"/>`);
        }

        // white outline box
        line(pt(0, 1, 0), pt(7, 1, 0), "#e9ecee");
        line(pt(0, 0, 0), pt(7, 0, 0), "#f4f4f4", 0.9);
        line(pt(0, 0, 2), pt(7, 0, 2), "#f0c9cf", 0.6, 0.8);
        line(pt(7, 1, 0), pt(7, 0, 0), "#e9ecee");

        // front columns and footings
        for (let i = 7; i >= 0; i--) {
            footing(i, 0);
            const end = i === 0 || i === 7;
            const solid = i === 3 || i === 6;
            line(pt(i, 0, 3), pt(i, 0, 49), end ? "#c4242f" : solid ? "#a30f1a" : "#b3444c", end ? 1.6 : 2.6);
            line(pt(i, 0, 0), pt(i, 0, 48), solid ? "#c9303a" : "#e3b5b8", 0.6);
            line(move(pt(i, 0, 49), -2, 0), move(pt(i, 0, 49), 2, 0), "#e0702e", 1);
        }

        // UCS icon
        line([199, 325], [180, 331], "#2f63c4", 2);
        line([199, 325], [212, 334], "#d04545", 1.5);
        line([199.5, 307], [199.5, 325], "#3b9a35", 2);
        parts.push('<path d="M179 325h4l-4 4h4" fill="none" stroke="#3f7bdc" stroke-width=".8"/>');
        parts.push('<path d="M213 329l4 5M217 329l-4 5" stroke="#c43a3a" stroke-width=".8"/>');

        // crosshair
        line([318.5, 298], [318.5, 327], "#4fae4b", 1);
        line([300, 325], [328, 313], "#6d6bb0", 0.8);
        line([312, 311], [333, 328], "#b07a86", 0.8);
        parts.push('<rect x="317" y="315.5" width="3" height="3" fill="#222831" stroke="#fff" stroke-width=".9"/>');

        svg.innerHTML = parts.join("");
    </script>
</body>
</html>
